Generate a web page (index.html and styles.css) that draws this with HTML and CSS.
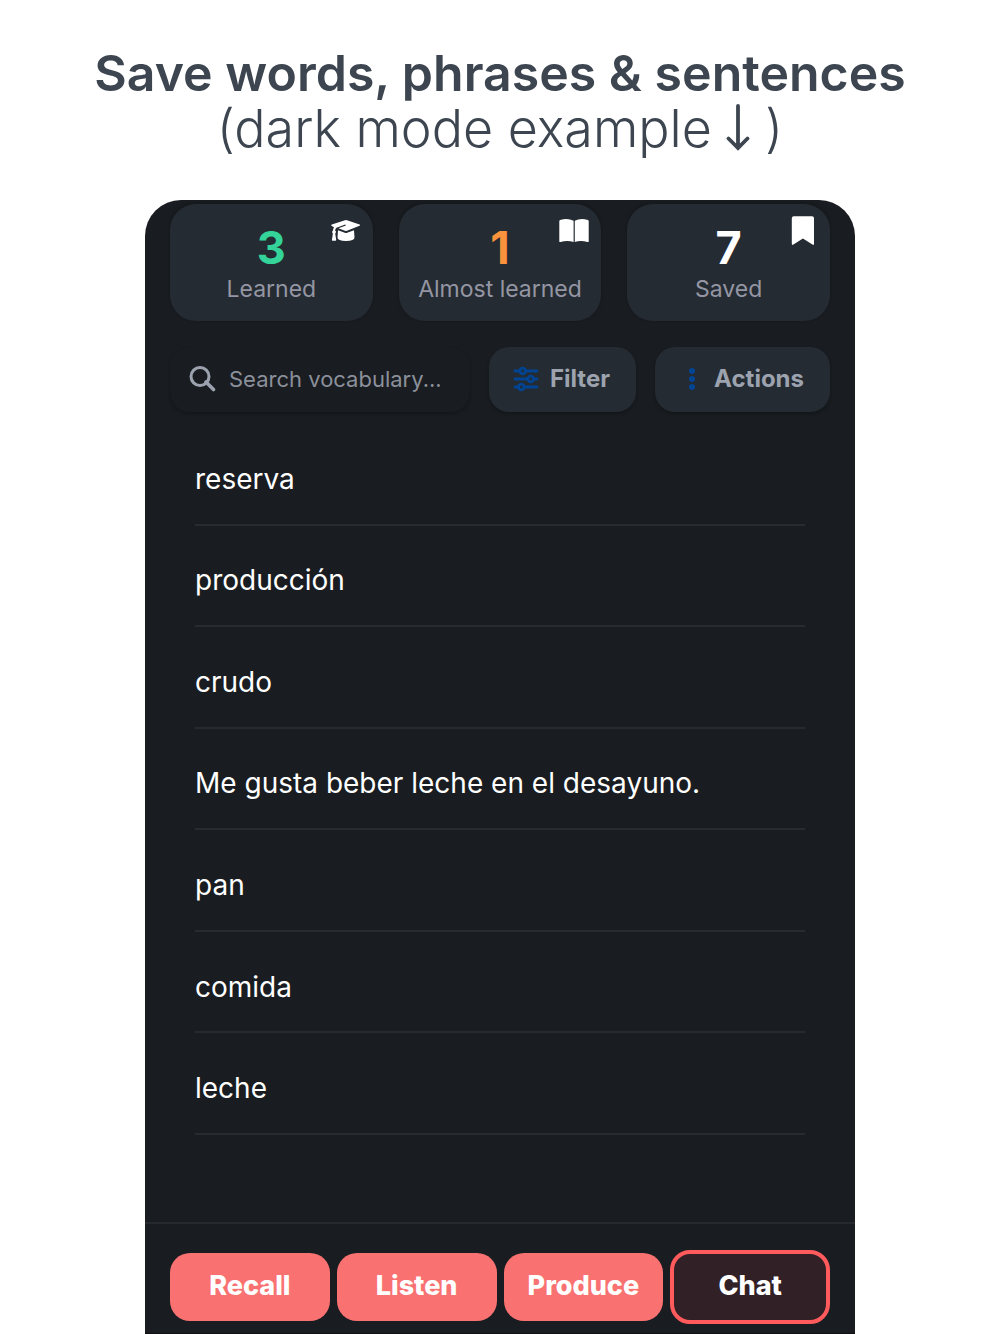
FILE: index.html
```html
<!DOCTYPE html>
<html lang="en">
<head>
<meta charset="utf-8">
<meta name="viewport" content="width=device-width, initial-scale=1">
<title>Save words, phrases &amp; sentences</title>
<link rel="stylesheet" href="styles.css">
</head>
<body>
<header class="headline">
  <h1 class="headline-title">Save words, phrases &amp; sentences</h1>
  <p class="headline-note">(dark mode example <svg class="arrow" viewBox="0 0 24 48" aria-hidden="true"><path d="M12 2V44M2.500 34.500 12 44l9.500-9.500" fill="none" stroke="currentColor" stroke-width="3.800" stroke-linecap="round"/></svg> )</p>
</header>
<div class="phone">
  <main class="content">
    <section class="stats" aria-label="Progress">
      <article class="stat">
        <strong class="stat-value learned">3</strong>
        <span class="stat-label">Learned</span>
        <svg class="stat-icon" viewBox="0 0 32 32" aria-hidden="true"><path fill="currentColor" d="M15 5.200q1-.3 2 0l12.600 4.400q1.400.6 0 1.200L17 15.800q-1 .3-2 0l-6.600-2.500 6.900-2.600q.7-.5.300-.9-.4-.4-1-.1L6.500 12.700q-1.300.9-1.400 2.800 1 .6.900 1.600-.1.900-.8 1.400l1 6.200q.1 1-.9 1H2.700q-1 0-.8-1l1-6.200q-.8-.5-.8-1.400 0-1 .9-1.600.1-1.800 1-3.200L1.800 10.900q-1.400-.7 0-1.300z"/><path fill="currentColor" d="M8 15.300l6.800 2.400q1.200.4 2.400 0l6.800-2.400.5 7.200q0 3.400-8.500 3.500-8.500-.1-8.500-3.500z"/></svg>
      </article>
      <article class="stat">
        <strong class="stat-value almost">1</strong>
        <span class="stat-label">Almost learned</span>
        <svg class="stat-icon" viewBox="0 0 32 32" aria-hidden="true"><path fill="currentColor" d="M15.600 5.800v21.200Q9.500 25.200 2.500 27q-1.200.4-1.200-.8V5.900q0-.7.800-1Q9.800 2.800 15.600 5.800zM16.800 5.800v21.200q5.900-1.800 12.700 0 1.200.4 1.200-.8V5.900q0-.7-.8-1-7.600-2.100-13.100.9z"/></svg>
      </article>
      <article class="stat">
        <strong class="stat-value">7</strong>
        <span class="stat-label">Saved</span>
        <svg class="stat-icon" viewBox="0 0 32 32" aria-hidden="true"><path fill="currentColor" d="M6.800 1.200h18.200q2 0 2 2v25.600q0 1.800-1.600.8L15.900 23.500 6.400 29.600q-1.600 1-1.600-.8V3.200q0-2 2-2z"/></svg>
      </article>
    </section>
    <div class="toolbar">
      <label class="search">
        <svg class="search-icon" viewBox="0 0 28 28" aria-hidden="true"><path d="M18 17l7.500 7.500" fill="none" stroke="currentColor" stroke-width="3.600" stroke-linecap="round"/><circle cx="12" cy="11.500" r="9" fill="none" stroke="currentColor" stroke-width="3"/></svg>
        <input class="search-input" type="search" placeholder="Search vocabulary..." aria-label="Search vocabulary">
      </label>
      <button class="tool filter" type="button">
        <svg class="tool-icon" viewBox="0 0 26 26" aria-hidden="true"><g fill="none" stroke="currentColor" stroke-width="2.800" stroke-linecap="round"><path d="M2 5h4.500M13 5h11M2 13h12.500M21 13h3M2 21h3.500M12 21h12"/><circle cx="9.700" cy="5" r="2.800"/><circle cx="17.700" cy="13" r="2.800"/><circle cx="8.300" cy="21" r="2.800"/></g></svg>
        Filter
      </button>
      <button class="tool actions" type="button">
        <svg class="tool-icon" viewBox="0 0 26 26" aria-hidden="true"><g fill="currentColor"><circle cx="13" cy="5" r="3"/><circle cx="13" cy="13" r="3"/><circle cx="13" cy="21" r="3"/></g></svg>
        Actions
      </button>
    </div>
    <ul class="words">
      <li class="word">reserva</li>
      <li class="word">producción</li>
      <li class="word">crudo</li>
      <li class="word">Me gusta beber leche en el desayuno.</li>
      <li class="word">pan</li>
      <li class="word">comida</li>
      <li class="word">leche</li>
    </ul>
  </main>
  <footer class="modes">
    <button class="mode" type="button">Recall</button>
    <button class="mode" type="button">Listen</button>
    <button class="mode" type="button">Produce</button>
    <button class="mode chat" type="button">Chat</button>
  </footer>
</div>
</body>
</html>
```
FILE: styles.css
```css
* {
  box-sizing: border-box;
}

body {
  display: flex;
  flex-direction: column;
  min-height: 100vh;
  margin: 0;
  background: #fff;
  font-family: Inter, "Liberation Sans", sans-serif;
}

.headline {
  padding: 46px 16px 44px;
  color: #3d4650;
  line-height: 55px;
  text-align: center;
}

.headline-title {
  margin: 0;
  font-size: 50px;
  font-weight: 600;
}

.headline-note {
  margin: 0;
  font-size: 52px;
  font-weight: 300;
}

.arrow {
  width: 24px;
  height: 48px;
  vertical-align: -5px;
}

.phone {
  display: flex;
  flex: 1;
  flex-direction: column;
  width: 71%;
  margin: 0 auto;
  overflow: hidden;
  border-radius: 36px 36px 0 0;
  background: #191c20;
}

.content {
  display: flex;
  flex: 1;
  flex-direction: column;
  padding: 4px 25px 87px;
}

.stats {
  display: grid;
  grid-template-columns: repeat(3, 1fr);
  gap: 26px;
}

.stat {
  display: flex;
  position: relative;
  flex-direction: column;
  align-items: center;
  padding: 17px 8px;
  border-radius: 26px;
  background: #252b32;
  box-shadow: 0 -1px 3px #14171a;
}

.stat-value {
  color: #fff;
  font-size: 45px;
  font-weight: 700;
  line-height: 54px;
}

.learned {
  color: #34d399;
}

.almost {
  color: #fb923c;
}

.stat-label {
  color: #9496a3;
  font-size: 23px;
  line-height: 29px;
  white-space: nowrap;
}

.stat-icon {
  position: absolute;
  top: 11px;
  right: 11px;
  width: 32px;
  height: 32px;
  color: #fff;
}

.toolbar {
  display: flex;
  gap: 19px;
  margin-top: 26px;
}

.search {
  display: flex;
  flex: 1;
  align-items: center;
  gap: 13px;
  min-width: 0;
  padding: 0 8px 2px 18px;
  border-radius: 20px;
  box-shadow: 0 2px 3px #14171a;
}

.search-icon {
  flex: none;
  width: 28px;
  height: 28px;
  color: #9ca3af;
}

.search-input {
  flex: 1;
  min-width: 0;
  padding: 0;
  border: 0;
  outline: 0;
  appearance: none;
  background: transparent;
  color: #fff;
  font: 400 22px/28px Inter, "Liberation Sans", sans-serif;
}

.search-input::-webkit-search-cancel-button {
  display: none;
}

.search-input::placeholder {
  color: #8b909b;
  opacity: 1;
}

.tool {
  display: flex;
  flex: none;
  align-items: center;
  justify-content: space-between;
  height: 65px;
  padding: 0 26px 1px 24px;
  border: 0;
  border-radius: 20px;
  background: #252b32;
  box-shadow: 0 2px 3px #14171a;
  color: #9ca3af;
  font: 700 24px/32px Inter, "Liberation Sans", sans-serif;
}

.filter {
  width: 147px;
}

.actions {
  width: 175px;
}

.tool-icon {
  width: 26px;
  height: 26px;
  color: #004493;
}

.words {
  display: grid;
  flex: 1;
  grid-auto-rows: 1fr;
  margin: 12px 25px 0;
  padding: 0;
  list-style: none;
}

.word {
  display: flex;
  align-items: center;
  padding-top: 10px;
  border-bottom: 2px solid #252b30;
  color: #fff;
  font-size: 28px;
  line-height: 36px;
}

.modes {
  display: grid;
  grid-template-columns: repeat(4, 1fr);
  align-items: center;
  gap: 7px;
  padding: 26px 25px 9px;
  border-top: 2px solid #252a2f;
  border-bottom: 1px solid #0c0e10;
}

.mode {
  min-width: 0;
  height: 68px;
  padding: 0 0 2px;
  border: 0;
  border-radius: 20px;
  background: #f97171;
  color: #fff;
  font: 800 27px/32px Inter, "Liberation Sans", sans-serif;
}

.chat {
  height: 74px;
  border: 4px solid #ff5a5c;
  background: #312126;
}
```
